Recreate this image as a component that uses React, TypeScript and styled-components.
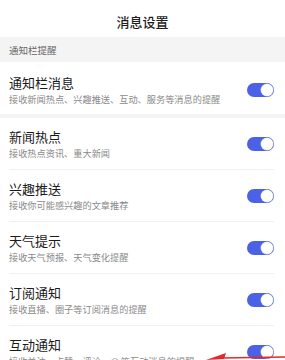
import React, { useState } from "react";
import styled, { createGlobalStyle } from "styled-components";

type Item = {
  title: string;
  desc: string;
};

const items: Item[] = [
  { title: "通知栏消息", desc: "接收新闻热点、兴趣推送、互动、服务等消息的提醒" },
  { title: "新闻热点", desc: "接收热点资讯、重大新闻" },
  { title: "兴趣推送", desc: "接收你可能感兴趣的文章推荐" },
  { title: "天气提示", desc: "接收天气预报、天气变化提醒" },
  { title: "订阅通知", desc: "接收直播、圈子等订阅消息的提醒" },
  { title: "互动通知", desc: "接收关注、点赞、评论、@ 等互动消息的提醒" },
];

export default function App() {
  const [checked, setChecked] = useState<boolean[]>(items.map(() => true));

  const toggle = (index: number) => {
    setChecked((prev) => prev.map((v, i) => (i === index ? !v : v)));
  };

  return (
    <SPage>
      <GlobalStyle />
      <SHeader>消息设置</SHeader>
      <SSection>通知栏提醒</SSection>
      {items.map((item, index) => (
        <React.Fragment key={item.title}>
          {/* 最初の項目の後は太い区切り */}
          {index === 1 && <SGap />}
          {index > 1 && <SDivider />}
          <SRow first={index === 0}>
            <STexts>
              <STitle>{item.title}</STitle>
              <SDesc>{item.desc}</SDesc>
            </STexts>
            <SSwitch on={checked[index]} onClick={() => toggle(index)}>
              <SKnob on={checked[index]} />
            </SSwitch>
          </SRow>
        </React.Fragment>
      ))}
      <SArrow width="80" height="12" viewBox="0 0 80 12">
        <polygon points="0,10 20,3 18,9" fill="#e8262b" />
        <line x1="16" y1="8" x2="80" y2="7" stroke="#e8262b" strokeWidth="1.6" />
      </SArrow>
    </SPage>
  );
}

const GlobalStyle = createGlobalStyle`
  html, body {
    margin: 0;
    padding: 0;
    background: #ffffff;
  }
  body {
    font-family: "Noto Sans CJK SC", "Noto Sans", sans-serif;
  }
`;

const SPage = styled.div`
  position: relative;
  width: 285px;
  height: 360px;
  overflow: hidden;
  background: #ffffff;
`;

const SHeader = styled.div`
  height: 37px;
  display: flex;
  align-items: center;
  justify-content: center;
  padding-top: 5px;
  box-sizing: border-box;
  font-size: 13px;
  font-weight: 500;
  color: #1c1c1c;
`;

const SSection = styled.div`
  height: 25px;
  display: flex;
  align-items: center;
  padding-left: 9px;
  background: #f4f4f4;
  font-size: 9.5px;
  color: #666666;
`;

const SRow = styled.div<{ first?: boolean }>`
  display: flex;
  align-items: center;
  justify-content: space-between;
  height: ${(p) => (p.first ? "52px" : "51px")};
  padding: ${(p) => (p.first ? "3px 11px 0 9px" : "0 11px 0 9px")};
  box-sizing: border-box;
`;

const STexts = styled.div`
  display: flex;
  flex-direction: column;
  gap: 1px;
`;

const STitle = styled.div`
  font-size: 13px;
  line-height: 18px;
  color: #1a1a1a;
`;

const SDesc = styled.div`
  font-size: 9.2px;
  line-height: 13px;
  color: #8a8a8a;
`;

const SGap = styled.div`
  height: 4px;
  background: #f4f4f4;
`;

const SDivider = styled.div`
  height: 1px;
  margin: 0 11px 0 9px;
  background: #f0f0f0;
`;

const SSwitch = styled.div<{ on: boolean }>`
  position: relative;
  width: 27px;
  height: 14px;
  border-radius: 7px;
  background: ${(p) => (p.on ? "#4b62e6" : "#d0d0d0")};
  cursor: pointer;
  flex-shrink: 0;
`;

const SKnob = styled.div<{ on: boolean }>`
  position: absolute;
  top: 1px;
  left: ${(p) => (p.on ? "14px" : "1px")};
  width: 12px;
  height: 12px;
  border-radius: 50%;
  background: #ffffff;
  box-shadow: 0 0 0 0.5px #c8c8d0;
`;

const SArrow = styled.svg`
  position: absolute;
  left: 206px;
  top: 350px;
`;
